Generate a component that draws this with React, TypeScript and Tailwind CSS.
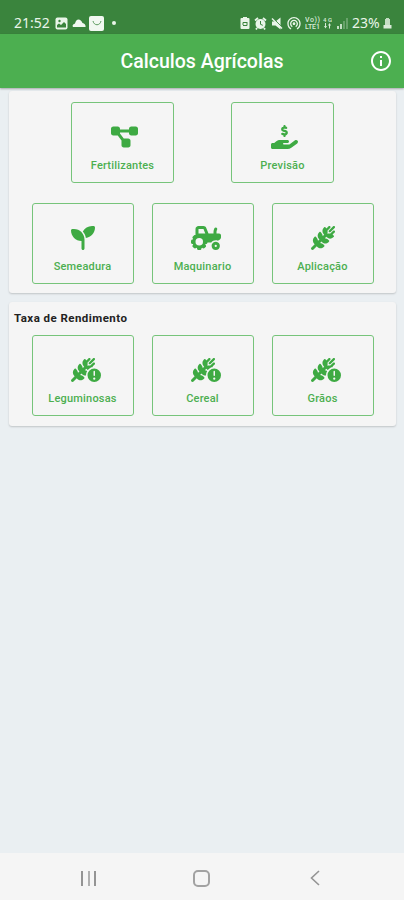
import type { ReactNode } from "react"
import type { IconType } from "react-icons"
import {
  FaDiagramProject,
  FaHandHoldingDollar,
  FaSeedling,
  FaTractor,
  FaWheatAwn,
  FaWheatAwnCircleExclamation,
} from "react-icons/fa6"
import { MdCloud, MdInfoOutline, MdWifiTethering } from "react-icons/md"

interface TileProps {
  icon: IconType
  iconSize: string
  label: string
  size?: string
}

function Tile({ icon: Icon, iconSize, label, size = "h-[81px] w-[102px]" }: TileProps) {
  return (
    <button
      className={`flex flex-col items-center rounded-[3px] border border-[#76c47a] pt-[22px] text-[#4caf50] ${size}`}
    >
      <span className="flex h-6 w-6">
        <Icon className={`max-w-none shrink-0 fill-[#3eaa43] ${iconSize}`} />
      </span>
      <span className="mt-[8px] text-[11px] leading-[17px] font-medium tracking-[0.2px]">
        {label}
      </span>
    </button>
  )
}

function Card({ className, children }: { className: string; children: ReactNode }) {
  return (
    <section
      className={`rounded-[3px] bg-[#f5f5f5] shadow-[0_1px_2px_rgba(0,0,0,0.18)] ${className}`}
    >
      {children}
    </section>
  )
}

function StatusBar() {
  return (
    <div className="flex h-[34px] items-center bg-[#3a843d] pt-[12px] pr-[12px] pl-[14px] text-[#e9f5e9]">
      <span className="w-[37px] font-['Noto_Sans',sans-serif] text-[14px] leading-[16px]">
        21:52
      </span>
      <svg className="ml-[4px] h-[13px] w-[13px]" viewBox="0 0 13 13">
        <rect x="0.500" y="0.500" width="12" height="12" rx="2" fill="#e9f5e9" />
        <path d="M2 10.500V8l2-1.500l2 1.500l3-3l2 2v3.500z" fill="#3a843d" />
        <circle cx="4.500" cy="4" r="1.200" fill="#3a843d" />
      </svg>
      <svg className="ml-[4px] h-[8px] w-[14px]" viewBox="0 0 14 8" fill="#f1f8f1">
        <path d="M1 8Q-0.500 6 3 4.500Q4 0.500 6.500 0.500Q9 0.500 10.500 4Q14 5 13.500 8Z" />
      </svg>
      <span className="ml-[3px] flex h-[15px] w-[15px] items-center justify-center rounded-[2px] bg-[#f1f8f1]">
        <svg className="h-[10px] w-[10px]" viewBox="0 0 10 10" fill="none" stroke="#5d9c60">
          <path d="M1 3C2 8 8 8 9 3" />
        </svg>
      </span>
      <span className="ml-[8px] h-[4px] w-[4px] rounded-full bg-[#e9f5e9]" />

      <div className="ml-auto flex items-center">
        <svg className="h-[14px] w-[10px]" viewBox="0 0 10 14" fill="#e9f5e9">
          <path d="M3 1h4v1h1.500q1 0 1 1v9q0 1-1 1h-7q-1 0-1-1V3q0-1 1-1H3z" />
          <path d="M3 9V6.500h4M7 6v3.500H3" fill="none" stroke="#3a843d" />
        </svg>
        <svg className="ml-[4px] h-[13px] w-[13px]" viewBox="0 0 13 13" fill="#e9f5e9">
          <circle cx="6.500" cy="7" r="5" />
          <path d="M1 3.500L4 1M12 3.500L9 1M3 11l-1 1.500M10 11l1 1.500" stroke="#e9f5e9" strokeWidth="1.800" />
          <path d="M6.500 4v3.300l2.300 1" fill="none" stroke="#3a843d" />
        </svg>
        <svg className="ml-[4px] h-[13px] w-[12px]" viewBox="0 0 12 13" fill="#e9f5e9">
          <path d="M1 4.500h3.500L9.500 0.500v12L4.500 8.500H1z" />
          <path d="M2.500 1.500L12 11" stroke="#3a843d" />
          <path d="M1 1.500L11 11.500" stroke="#e9f5e9" strokeWidth="1.400" />
        </svg>
        <MdWifiTethering className="ml-[3px] h-[16px] w-[16px]" />
        <svg className="ml-[3px] h-[14px] w-[16px]" viewBox="0 0 16 14" fill="#d8ead8">
          <text x="0" y="6" fontSize="7" fontWeight="500" textLength="15">Vo))</text>
          <text x="0" y="13" fontSize="7" fontWeight="500" textLength="15">LTE1</text>
        </svg>
        <svg className="ml-[2px] h-[12px] w-[9px]" viewBox="0 0 9 12" fill="#d8ead8">
          <text x="0" y="5" fontSize="6" fontWeight="500" textLength="9">4G</text>
          <path d="M2 6h1v3h1l-1.500 2.500L1 9h1zM6 11.500h1v-3h1L6.500 6L5 8.500h1z" />
        </svg>
        <span className="ml-[5px] flex h-[12px] w-[11px] items-end gap-px">
          <span className="h-[3px] w-[2px] bg-[#c4dec4]" />
          <span className="h-[5px] w-[2px] bg-[#c4dec4]" />
          <span className="h-[8px] w-[2px] bg-[#68a26a]" />
          <span className="h-[11px] w-[2px] bg-[#68a26a]" />
        </span>
        <span className="ml-[4px] w-[31px] font-['Noto_Sans',sans-serif] text-[14px] leading-[16px] whitespace-nowrap">
          23%
        </span>
        <svg className="h-[12px] w-[9px]" viewBox="0 0 9 12">
          <path d="M3 1h3v1h1v6H2V2h1z" fill="#c4dec4" />
          <path d="M0.500 8h8v3.500h-8z" fill="#d8ead8" />
        </svg>
      </div>
    </div>
  )
}

function NavigationBar() {
  return (
    <nav className="mt-auto flex h-[47px] items-center bg-[#f5f5f5] pt-[3px]">
      <button className="ml-[81px] flex h-[15px] w-[15px] justify-between">
        <span className="h-full w-[2px] bg-[#949494]" />
        <span className="h-full w-[2px] bg-[#b0b0b0]" />
        <span className="h-full w-[2px] bg-[#949494]" />
      </button>
      <button className="ml-[97px] h-[17px] w-[17px] rounded-[5px] border-2 border-[#a2a2a2]" />
      <button className="ml-[100px]">
        <svg className="h-[16px] w-[10px]" viewBox="0 0 10 16" fill="none" stroke="#949494" strokeWidth="1.600">
          <path d="M9 1L1.500 8L9 15" />
        </svg>
      </button>
    </nav>
  )
}

export default function App() {
  return (
    <div className="flex h-screen w-full flex-col bg-[#eaeff2] font-['Roboto',sans-serif]">
      <StatusBar />
      <header className="z-10 flex h-[54px] items-center bg-[#4caf50] pr-[11px] pl-[35px] text-white shadow-[0_1px_2px_rgba(0,0,0,0.3)]">
        <h1 className="grow pt-[2px] text-center text-[19.500px] font-medium">Calculos Agrícolas</h1>
        <MdInfoOutline className="h-[24px] w-[24px]" />
      </header>

      <main className="flex flex-col pt-[3px] pr-[8px] pl-[9px]">
        <Card className="h-[202px] pt-[11px]">
          <div className="flex justify-center gap-[57px]">
            <Tile icon={FaDiagramProject} iconSize="h-6 w-[27px]" label="Fertilizantes" size="h-[81px] w-[103px]" />
            <Tile icon={FaHandHoldingDollar} iconSize="h-6 w-[27px]" label="Previsão" size="h-[81px] w-[103px]" />
          </div>
          <div className="mt-[20px] flex justify-center gap-[18px]">
            <Tile icon={FaSeedling} iconSize="h-6 w-6" label="Semeadura" />
            <Tile icon={FaTractor} iconSize="h-6 w-[30px]" label="Maquinario" />
            <Tile icon={FaWheatAwn} iconSize="h-6 w-6" label="Aplicação" />
          </div>
        </Card>

        <Card className="mt-[9px] h-[124px] pt-[8px]">
          <h2 className="pl-[5px] text-[11.500px] leading-[16px] font-bold tracking-[0.45px] text-[#222]">
            Taxa de Rendimento
          </h2>
          <div className="mt-[9px] flex justify-center gap-[18px]">
            <Tile icon={FaWheatAwnCircleExclamation} iconSize="h-6 w-[30px]" label="Leguminosas" />
            <Tile icon={FaWheatAwnCircleExclamation} iconSize="h-6 w-[30px]" label="Cereal" />
            <Tile icon={FaWheatAwnCircleExclamation} iconSize="h-6 w-[30px]" label="Grãos" />
          </div>
        </Card>
      </main>

      <NavigationBar />
    </div>
  )
}
